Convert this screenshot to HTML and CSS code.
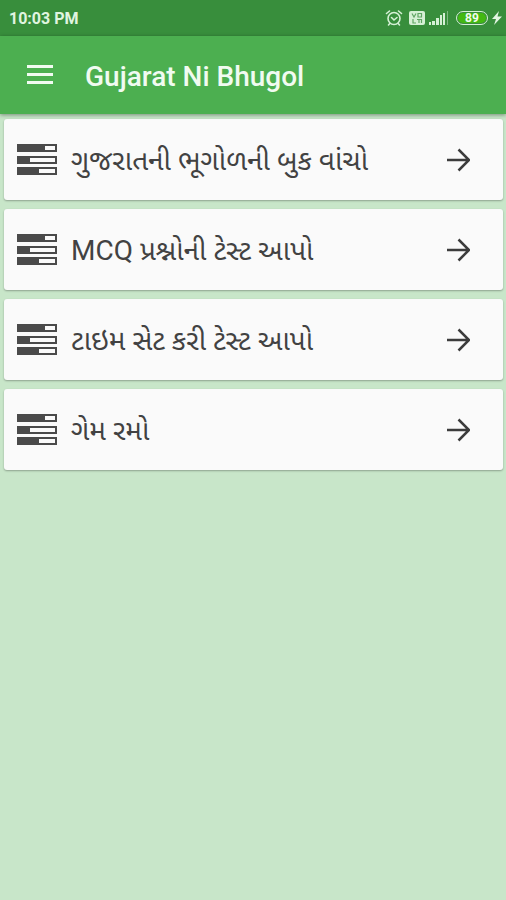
FILE: index.html
```html
<!DOCTYPE html>
<html lang="gu">
<head>
<meta charset="utf-8">
<meta name="viewport" content="width=device-width, initial-scale=1">
<title>Gujarat Ni Bhugol</title>
<link rel="stylesheet" href="styles.css">
</head>
<body>
<svg class="sprite" aria-hidden="true">
  <symbol id="tasks" viewBox="0 0 40 32">
    <path fill="#4a4a4a" fill-rule="evenodd" d="M0 0h40v8H0zM28 2v4h10V2zM0 12h40v8H0zM13 14v4h25v-4zM0 23h40v8H0zM22 25v4h16v-4z"/>
  </symbol>
  <symbol id="arrow" viewBox="0 0 24 24">
    <path fill="none" stroke="#3c3c3c" stroke-width="2.500" d="M1 12h22M12.500 1.500 23 12 12.500 22.500"/>
  </symbol>
</svg>
<div class="status">
  <span class="clock">10:03 PM</span>
  <div class="indicators">
    <svg class="alarm" viewBox="0 0 18 18" aria-hidden="true">
      <g fill="none" stroke="#d5f0d5" stroke-width="1.600" stroke-linecap="round"><circle cx="9" cy="9.500" r="6"/><path d="M1.500 4.500 4.500 2M16.500 4.500 13.500 2M6.500 8.500 9 11l3-2.500M4.800 14.500l-1.300 1.500M13.200 14.500l1.300 1.500"/></g>
    </svg>
    <svg class="volte" viewBox="0 0 16 14" aria-hidden="true">
      <rect width="16" height="14" rx="2" fill="#d5f0d5"/>
      <path fill="none" stroke="#5fa563" stroke-width="1.200" d="m3 2.500 2 3.500 2-3.500M9 2.500h3.500V6H9zM4 8v4h3M8 8.500h4M10 8.500V12M12.500 8v4"/>
    </svg>
    <svg class="signal" viewBox="0 0 19 14" aria-hidden="true">
      <path fill="#d5f0d5" d="M0 11h2v3H0zM3 10h3v4H3zM7 7h3v7H7zM11 4h2v10h-2zM14 2h2v12h-2z"/><path fill="#80b883" d="M18 0h1v14h-1z"/>
    </svg>
    <span class="battery"><span class="level">89</span></span>
    <svg class="bolt" viewBox="0 0 10 14" aria-hidden="true"><path fill="#e3f5e3" d="M7 0 0 8h4l-2 6 8-8.500H5.500z"/></svg>
  </div>
</div>
<header class="appbar">
  <button class="menu" type="button" aria-label="Menu">
    <svg viewBox="0 0 26 20" aria-hidden="true"><path fill="#f1fbf1" d="M0 0h26v3H0zM0 8h26v3H0zM0 16h26v3H0z"/></svg>
  </button>
  <h1>Gujarat Ni Bhugol</h1>
</header>
<main class="list">
  <a class="card" href="#book"><svg class="tasks" aria-hidden="true"><use href="#tasks"/></svg><span class="label">ગુજરાતની ભૂગોળની બુક વાંચો</span><svg class="arrow" aria-hidden="true"><use href="#arrow"/></svg></a>
  <a class="card" href="#mcq"><svg class="tasks" aria-hidden="true"><use href="#tasks"/></svg><span class="label">MCQ પ્રશ્નોની ટેસ્ટ આપો</span><svg class="arrow" aria-hidden="true"><use href="#arrow"/></svg></a>
  <a class="card" href="#timed"><svg class="tasks" aria-hidden="true"><use href="#tasks"/></svg><span class="label">ટાઇમ સેટ કરી ટેસ્ટ આપો</span><svg class="arrow" aria-hidden="true"><use href="#arrow"/></svg></a>
  <a class="card" href="#game"><svg class="tasks" aria-hidden="true"><use href="#tasks"/></svg><span class="label">ગેમ રમો</span><svg class="arrow" aria-hidden="true"><use href="#arrow"/></svg></a>
</main>
</body>
</html>
```
FILE: styles.css
```css
* { box-sizing: border-box; }
body {
  margin: 0;
  min-height: 100vh;
  background: #c8e6c9;
  font-family: Roboto, "Noto Sans", "Noto Sans Gujarati", sans-serif;
}
svg { display: block; flex: none; }
.sprite { position: absolute; width: 0; height: 0; }
.status {
  display: flex;
  align-items: center;
  justify-content: space-between;
  height: 36px;
  padding: 0 4px 0 9px;
  background: #388e3c;
}
.clock { color: #e0f5e0; font-size: 16px; font-weight: 700; }
.indicators { display: flex; align-items: center; gap: 4px; }
.alarm { width: 18px; height: 18px; margin-right: 2px; }
.volte { width: 16px; height: 14px; }
.signal { width: 19px; height: 14px; }
.battery {
  width: 32px;
  height: 14px;
  margin-left: 4px;
  padding: 1px;
  border: 1px solid #d5f0d5;
  border-radius: 7px;
}
.level {
  display: block;
  height: 10px;
  border-radius: 5px;
  background: #43b812;
  color: #f1fbf1;
  font-size: 12px;
  font-weight: 700;
  line-height: 10px;
  text-align: center;
}
.bolt { width: 10px; height: 14px; }
.appbar {
  position: relative;
  display: flex;
  align-items: center;
  gap: 20px;
  height: 78px;
  padding: 0 15px;
  background: #4caf50;
  box-shadow: 0 1px 4px rgba(0, 0, 0, 0.4);
}
.menu {
  display: grid;
  place-items: center;
  width: 50px;
  height: 50px;
  padding: 0;
  border: 0;
  background: none;
}
.menu svg { width: 26px; height: 20px; }
h1 {
  margin: 0;
  padding-top: 4px;
  color: #f1fbf1;
  font-size: 28px;
  font-weight: 500;
  line-height: 40px;
}
.list { display: grid; gap: 9px; padding: 5px 3px 5px 4px; }
.card {
  display: flex;
  align-items: center;
  height: 81px;
  padding: 0 33px 0 13px;
  border-radius: 3px;
  background: #fafafa;
  box-shadow: 0 1px 2px rgba(0, 0, 0, 0.3);
  color: #424242;
  text-decoration: none;
}
.tasks { width: 40px; height: 32px; }
.label {
  flex: 1;
  padding: 2px 0 0 14px;
  font-size: 28px;
  font-weight: 400;
  line-height: 40px;
  white-space: nowrap;
}
.arrow { width: 24px; height: 24px; }
```
